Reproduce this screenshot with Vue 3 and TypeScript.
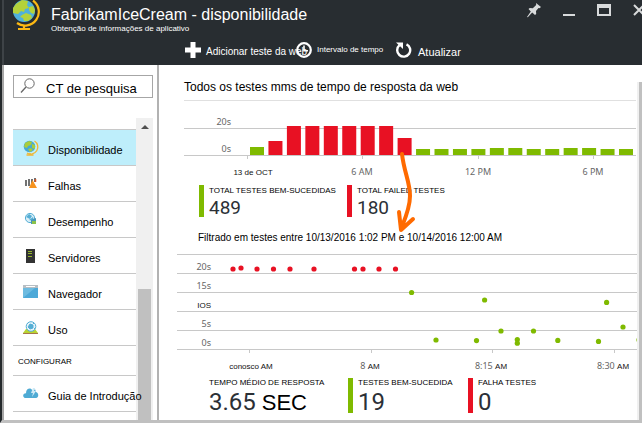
<script setup lang="ts">
interface MenuItem {
  id: string
  label: string
}

interface AxisLabel {
  x: number
  value: string
  suffix?: string
  dark?: boolean
}

interface Dot {
  x: number
  y: number
  failed?: boolean
}

const menu: MenuItem[] = [
  { id: 'globe', label: 'Disponibilidade' },
  { id: 'failures', label: 'Falhas' },
  { id: 'performance', label: 'Desempenho' },
  { id: 'servers', label: 'Servidores' },
  { id: 'browser', label: 'Navegador' },
  { id: 'usage', label: 'Uso' },
]

const barPitch = 18.45
const barHeights: number[] = [8, 14, 29, 29, 29, 29, 29, 29, 17, 6, 6, 6, 6, 7, 7, 6, 6, 7, 7, 6, 6]
const bars = barHeights.map((height, i) => ({
  x: 66 + i * barPitch,
  height,
  failed: i >= 1 && i <= 8,
}))

const barAxis: AxisLabel[] = [
  { x: 63, value: '13 de OCT', dark: true },
  { x: 178, value: '6 AM' },
  { x: 294, value: '12 PM' },
  { x: 409, value: '6 PM' },
]

const gridRows = [
  { y: 16, label: '20s' },
  { y: 35, label: '15s' },
  { y: 54, label: 'IOS' },
  { y: 73, label: '5s' },
  { y: 92, label: '0s' },
]

const timeAxis: AxisLabel[] = [
  { x: 72, value: 'conosco', suffix: 'AM', dark: true },
  { x: 194, value: '8', suffix: 'AM' },
  { x: 315, value: '8:15', suffix: 'AM' },
  { x: 437, value: '8:30', suffix: 'AM' },
]

const dots: Dot[] = [
  ...[56, 64, 80, 96.5, 113, 137, 177.5, 186, 202, 218.5].map((x, i) => ({
    x,
    y: i === 1 ? 14 : 15,
    failed: true,
  })),
  { x: 234.6, y: 38.5 },
  { x: 259, y: 86 },
  { x: 299.5, y: 86.6 },
  { x: 307.6, y: 46 },
  { x: 324, y: 77 },
  { x: 340.3, y: 85.5 },
  { x: 340.3, y: 89.2 },
  { x: 356.5, y: 77 },
  { x: 380.8, y: 86.4 },
  { x: 421.5, y: 87.4 },
  { x: 429.6, y: 48.4 },
  { x: 446, y: 73 },
  { x: 462, y: 86 },
]
</script>

<template>
  <div class="page">
    <header class="header">
      <div class="title-row">
        <svg class="logo" viewBox="0 0 28 32" aria-hidden="true">
          <path d="M21 .5A13.300 13.300 0 0 1 5 23" fill="none" stroke="#fcb813" stroke-width="2.200" />
          <path d="M12 25v4M6 29h12" stroke="#fcb813" stroke-width="2.200" fill="none" />
          <circle cx="12" cy="11" r="11" fill="#4fb0dc" />
          <path d="M4 4l6-4 6 1-1 4 2 3-4 1-1 3-3-1-3 3-5-1 0-5zM17 7l4-1 2 4-1 4-3-1-2-3zM10 15l4-2 5 2 1 3-4 3-4 0-1-3-3-1z" fill="#b4d23a" />
        </svg>
        <div class="titles">
          <h1>FabrikamIceCream - disponibilidade</h1>
          <p>Obtenção de informações de aplicativo</p>
        </div>
        <div class="window-controls">
          <button type="button" class="icon-button" aria-label="Fixar">
            <svg width="14" height="15" viewBox="0 0 14 15"><path d="M9 0l5 4-1.500 1.200-1-.2-2.500 3 .2 3-1.200 1L5.200 9.600.8 14.200 0 14l3.800-5.600L1.500 6l1.300-1 3 .2L9.200 2z" fill="#d8dadb" /></svg>
          </button>
          <button type="button" class="icon-button" aria-label="Minimizar">
            <svg width="12" height="15" viewBox="0 0 12 15"><path d="M0 12h12" stroke="#d8dadb" stroke-width="2" /></svg>
          </button>
          <button type="button" class="icon-button" aria-label="Maximizar">
            <svg width="14" height="15" viewBox="0 0 14 15"><path d="M0 1h14v12H0zM2 5v6h10V5z" fill="#d8dadb" fill-rule="evenodd" /></svg>
          </button>
          <button type="button" class="icon-button" aria-label="Fechar">
            <svg width="12" height="15" viewBox="0 0 12 15"><path d="M1 2l10 10M11 2L1 12" stroke="#d8dadb" stroke-width="2" /></svg>
          </button>
        </div>
      </div>
      <div class="toolbar">
        <button type="button" class="tool">
          <svg width="16" height="16" viewBox="0 0 16 16"><path d="M8 0v16M0 8h16" stroke="#fff" stroke-width="5" /></svg>
          <span>Adicionar teste da web</span>
        </button>
        <button type="button" class="tool small">
          <svg width="16" height="16" viewBox="0 0 16 16"><circle cx="8" cy="8" r="6.800" fill="none" stroke="#fff" stroke-width="2.200" /><path d="M8 3.500V8.800h4" fill="none" stroke="#fff" stroke-width="1.600" /></svg>
          <span>Intervalo de tempo</span>
        </button>
        <button type="button" class="tool large">
          <svg width="16" height="16" viewBox="0 0 16 16"><path d="M10.500 2.300A6.500 6.500 0 1 1 3.500 3.200" fill="none" stroke="#fff" stroke-width="2.400" /><path d="M0 .5h7v6.500z" fill="#fff" /></svg>
          <span>Atualizar</span>
        </button>
      </div>
    </header>

    <div class="body">
      <aside class="sidebar">
        <label class="search">
          <svg width="16" height="16" viewBox="0 0 16 16" aria-hidden="true"><circle cx="9.500" cy="5.500" r="4.700" fill="none" stroke="#666" /><path d="M6 9L1 14.500" stroke="#666" stroke-width="1.300" /></svg>
          <input type="text" placeholder="CT de pesquisa" aria-label="CT de pesquisa" />
        </label>
        <div class="menu-area">
          <nav class="menu">
            <a v-for="(item, i) in menu" :key="item.id" href="#" class="menu-item" :class="{ active: i === 0 }">
              <svg class="menu-icon" viewBox="0 0 16 16" aria-hidden="true">
                <g v-if="item.id === 'globe'">
                  <path d="M11.500 1A7 7 0 0 1 4 13" fill="none" stroke="#f2b632" stroke-width="1.300" />
                  <path d="M7 13v2M3.500 15h7" stroke="#f2b632" stroke-width="1.300" />
                  <circle cx="6.500" cy="6.500" r="5.800" fill="#45a9d6" />
                  <path d="M2 3l4-2 3 1-1 3-3 1-1 2-3-1zM9 4l3 1v4l-3-1zM5 9l3-1 2 2-3 2z" fill="#a9cd3c" />
                </g>
                <g v-else-if="item.id === 'failures'">
                  <path d="M3 4v6M6 3v7M9 3v7M12 2v4" stroke="#444" stroke-width="1.500" />
                  <path d="M9.500 4l4.500 8H6z" fill="#f7931e" />
                  <path d="M12.500 3v3" stroke="#d9541e" stroke-width="1.500" />
                </g>
                <g v-else-if="item.id === 'performance'">
                  <circle cx="7" cy="6" r="4.600" fill="#d9eef7" stroke="#54aed5" />
                  <path d="M3 5l3-3 3 2-2 3zM6 8l4-3 1 4z" fill="#54aed5" />
                  <path d="M8 8l5-2v6H8z" fill="#4695b8" />
                  <path d="M9 9h4v3H9z" fill="#8bc34a" />
                </g>
                <g v-else-if="item.id === 'servers'">
                  <path d="M3 1h9v14H3z" fill="#333" />
                  <path d="M5 3.500h4M5 5.500h4M5 8.500h4" stroke="#92b52a" />
                </g>
                <g v-else-if="item.id === 'browser'">
                  <path d="M0 1h15v13H0z" fill="#4da9d8" />
                  <path d="M0 14V4h12z" fill="#6dbbe0" />
                  <path d="M0 1h15v3H0z" fill="#b7bec3" />
                  <path d="M3 2.500h9" stroke="#fff" />
                </g>
                <g v-else>
                  <path d="M0 13l3-4h9l3 4v1H0z" fill="#b8d432" />
                  <path d="M0 13.500h15" stroke="#a87848" />
                  <circle cx="8" cy="6.500" r="4.800" fill="#e8f5fb" stroke="#54aed5" />
                  <path d="M7 4l3 1v3l-3 1-2-2zM4 4l2-2M11 8l1 1M10 3l1 1" fill="#54aed5" stroke="#54aed5" />
                </g>
              </svg>
              <span>{{ item.label }}</span>
            </a>
            <h2 class="menu-section">CONFIGURAR</h2>
            <a href="#" class="menu-item">
              <svg class="menu-icon" viewBox="0 0 16 16" aria-hidden="true">
                <path d="M3 12C-1 12-.5 7 3 7.200 3 2 8 1.500 9 4l1 1 2-2 1 3c3 1 3 5.500 0 6z" fill="#4fabd4" />
                <path d="M10 2L8 7h2l-1 4 4-6h-2l1-3z" fill="#cfeaf6" />
              </svg>
              <span>Guia de Introdução</span>
            </a>
          </nav>
          <div class="menu-scroll">
            <svg width="8" height="4" viewBox="0 0 8 4" aria-hidden="true"><path d="M0 4l4-4 4 4z" fill="#505050" /></svg>
            <div class="menu-thumb"></div>
          </div>
        </div>
      </aside>

      <main class="content">
        <h2 class="chart-title">Todos os testes mms de tempo de resposta da web</h2>
        <svg class="bar-chart" viewBox="0 0 452 85" role="img" aria-label="Tempo de resposta por hora">
          <path d="M0 .5h452" stroke="#e0e0e0" />
          <path d="M0 28.500h452" stroke="#c8c8c8" />
          <text class="axis end" x="47" y="25">20s</text>
          <text class="axis end" x="47" y="52">0s</text>
          <rect v-for="(bar, i) in bars" :key="i" :x="bar.x" :y="55 - bar.height" width="14" :height="bar.height" :class="bar.failed ? 'failed' : 'passed'" />
          <path d="M0 55.500h452" stroke="#c8c8c8" />
          <g v-for="mark in barAxis" :key="mark.value">
            <path :d="`M${mark.x + 0.5} 55v4`" stroke="#c8c8c8" />
            <text class="axis middle" :class="{ dark: mark.dark }" :x="mark.dark ? mark.x + 6 : mark.x" y="75">{{ mark.value }}</text>
          </g>
        </svg>

        <div class="stats totals">
          <div class="stat green">
            <span class="stat-label">TOTAL TESTES BEM-SUCEDIDAS</span>
            <strong>489</strong>
          </div>
          <div class="stat red">
            <span class="stat-label">TOTAL FAILED TESTES</span>
            <strong>180</strong>
          </div>
        </div>

        <p class="filter">Filtrado em testes entre 10/13/2016 1:02 PM e 10/14/2016 12:00 AM</p>

        <svg class="dot-chart" viewBox="0 0 460 124" role="img" aria-label="Testes individuais">
          <path d="M0 .5h460M0 19.500h460M0 38.500h460M0 57.500h460M0 76.500h460M0 95.500h460" stroke="#c8c8c8" />
          <text v-for="row in gridRows" :key="row.label" class="axis end" :class="{ dark: row.label === 'IOS' }" x="34" :y="row.y">{{ row.label }}</text>
          <circle v-for="(dot, i) in dots" :key="i" :cx="dot.x" :cy="dot.y" r="2.600" :class="dot.failed ? 'failed' : 'passed'" />
          <g v-for="mark in timeAxis" :key="mark.value">
            <path :d="`M${mark.x + 0.5} 95v4`" stroke="#c8c8c8" />
            <text class="axis middle" :class="{ dark: mark.dark }" :x="mark.dark ? mark.x + 2 : mark.x - 1" y="115">{{ mark.value }} <tspan class="dark">{{ mark.suffix }}</tspan></text>
          </g>
        </svg>

        <div class="stats filtered">
          <div class="stat">
            <span class="stat-label">TEMPO MÉDIO DE RESPOSTA</span>
            <strong>3.65 <span class="unit">SEC</span></strong>
          </div>
          <div class="stat green">
            <span class="stat-label">TESTES BEM-SUCEDIDA</span>
            <strong>19</strong>
          </div>
          <div class="stat red">
            <span class="stat-label">FALHA TESTES</span>
            <strong>0</strong>
          </div>
        </div>

        <svg class="callout" width="24" height="84" viewBox="0 0 24 84" aria-hidden="true">
          <path d="M6 4C8 22 14 32 14 46 14 58 9 69 5 79M3 62l2 18 12-11" fill="none" stroke="#ff6a00" stroke-width="4" stroke-linecap="round" stroke-linejoin="round" />
        </svg>
      </main>
      <div class="page-scroll"></div>
    </div>
  </div>
</template>

<style>
body {
  margin: 0;
}
</style>

<style scoped>
* {
  box-sizing: border-box;
}

.page {
  display: flex;
  flex-direction: column;
  min-height: 100vh;
  border-left: 2px solid #24292c;
  border-bottom: 3px solid #c0c0c0;
  background: #fff;
  color: #000;
  font-family: "Liberation Sans", Arial, sans-serif;
  overflow: hidden;
}

h1,
h2,
p {
  margin: 0;
  font-weight: 400;
}

button {
  padding: 0;
  border: 0;
  background: none;
  color: inherit;
  font: inherit;
}

svg {
  display: block;
  flex: none;
}

.header {
  padding-bottom: 6px;
  border-left: 2px solid #3e4347;
  background: #282d31;
  color: #fff;
}

.title-row {
  display: flex;
  align-items: flex-start;
  height: 41px;
  padding-left: 8px;
}

.logo {
  width: 28px;
  height: 32px;
}

.titles {
  flex: 1;
  padding: 5px 0 0 11px;
  white-space: nowrap;
}

h1 {
  font-size: 16px;
  line-height: 19px;
}

.titles p {
  font-size: 8px;
  line-height: 9px;
}

.window-controls {
  display: flex;
  gap: 22px;
  padding-top: 3px;
  margin-right: -3px;
}

.toolbar {
  display: grid;
  grid-template-columns: 111px 100px auto;
  height: 18px;
  padding-left: 181px;
}

.tool {
  display: flex;
  align-items: center;
  gap: 5px;
  font-size: 10px;
  line-height: 14px;
  white-space: nowrap;
}

.tool span {
  padding-top: 4px;
}

.tool.small {
  font-size: 8px;
}

.tool.small span {
  padding-top: 0;
}

.tool.large {
  gap: 6px;
  font-size: 11px;
}

.body {
  display: flex;
  flex: 1;
}

.sidebar {
  display: flex;
  flex-direction: column;
  flex: none;
  width: 157px;
  padding: 10px 4px 0 9px;
  border-left: 2px solid #a6a6a6;
  border-right: 2px solid #b2b2b2;
}

.search {
  display: flex;
  align-items: center;
  height: 23px;
  padding-left: 6px;
  border: 1px solid #a6a6a6;
}

.search svg {
  margin-bottom: 2px;
}

.search input {
  flex: 1;
  min-width: 0;
  padding: 4px 0 0 10px;
  border: 0;
  outline: 0;
  background: none;
  font: 13px "Liberation Sans", Arial, sans-serif;
}

.search input::placeholder {
  color: #000;
  opacity: 1;
}

.menu-area {
  display: flex;
  flex: 1;
  margin-top: 20px;
}

.menu {
  position: relative;
  z-index: 1;
  flex: 1;
  min-width: 0;
  margin-top: 11px;
  border-top: 1px solid #c8c8c8;
}

.menu-item {
  display: flex;
  align-items: center;
  gap: 9px;
  height: 36px;
  padding-left: 10px;
  border-bottom: 1px solid #c8c8c8;
  color: #000;
  font-size: 11px;
  text-decoration: none;
  white-space: nowrap;
}

.menu-item span {
  padding-top: 4px;
}

.menu-item.active {
  background: #beeefb;
}

.menu-icon {
  width: 16px;
  height: 16px;
}

.menu-section {
  height: 30px;
  padding-left: 5px;
  border-bottom: 1px solid #c8c8c8;
  font-size: 8px;
  line-height: 31px;
}

.menu-scroll {
  display: flex;
  flex-direction: column;
  align-items: center;
  width: 17px;
  padding-top: 7px;
  background: #f0f0f0;
}

.menu-thumb {
  flex: 1;
  width: 13px;
  margin-top: 160px;
  background: #c0c0c0;
}

.content {
  position: relative;
  flex: 1;
  min-width: 0;
}

.chart-title {
  padding: 14px 0 5px 25px;
  font-size: 12px;
  line-height: 16px;
}

.bar-chart {
  width: calc(100% - 26px);
  margin-left: 25px;
}

.dot-chart {
  width: calc(100% - 18px);
  margin-left: 18px;
}

.axis {
  fill: #666;
  font-family: "Noto Sans", sans-serif;
  font-size: 9px;
}

.axis.end {
  text-anchor: end;
}

.axis.middle {
  text-anchor: middle;
}

.dark {
  fill: #111;
  font-family: "Liberation Sans", Arial, sans-serif;
  font-size: 8px;
}

.failed {
  fill: #e81123;
}

.passed {
  fill: #7fba00;
}

.stats {
  display: grid;
  padding-left: 40px;
  white-space: nowrap;
}

.totals {
  grid-template-columns: 148px auto;
}

.filtered {
  grid-template-columns: 149px 120px auto;
}

.stat {
  display: flex;
  flex-direction: column;
  height: 32px;
  padding-left: 5px;
  border-left: 5px solid transparent;
}

.filtered .stat {
  height: 35px;
}

.stat.green {
  border-color: #7fba00;
}

.stat.red {
  border-color: #e81123;
}

.stat-label {
  font-size: 8px;
  line-height: 12px;
}

.stat strong {
  color: #2b3036;
  font: 400 19px/22px Roboto, sans-serif;
}

.filtered .stat-label {
  line-height: 10px;
}

.filtered strong {
  font-size: 24px;
  line-height: 28px;
}

.stat .unit {
  color: #000;
  font: 22px/24px "Liberation Sans", Arial, sans-serif;
}

.filter {
  padding: 13px 0 8px 39px;
  font-size: 10px;
  line-height: 16px;
}

.callout {
  position: absolute;
  top: 85px;
  left: 237px;
}

.page-scroll {
  width: 5px;
  margin-top: 17px;
  border-left: 2px solid #f0f0f0;
  background: #c0c0c0;
}
</style>
